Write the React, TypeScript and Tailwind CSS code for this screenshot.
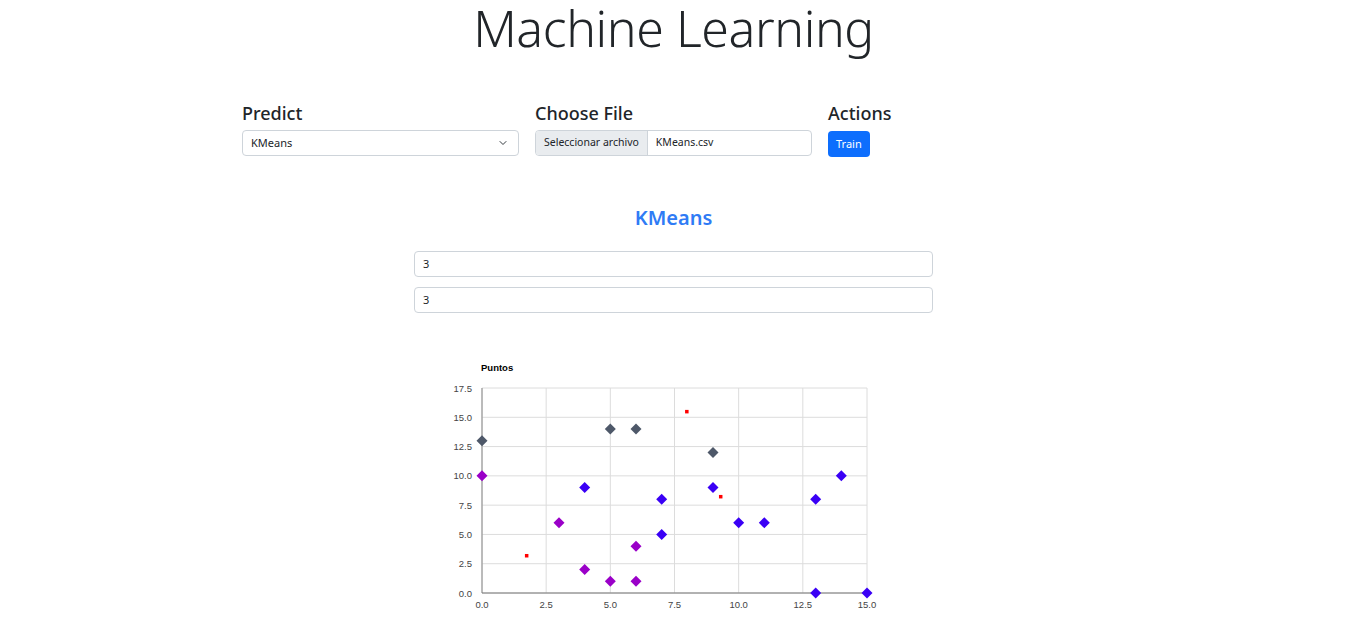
import React from "react";

const X0 = 58, X1 = 443, Y0 = 238, Y1 = 33;
const sx = (v: number) => X0 + (v / 15) * (X1 - X0);
const sy = (v: number) => Y0 - (v / 17.5) * (Y0 - Y1);

const gray = [[0, 13], [5, 14], [6, 14], [9, 12]];
const purple = [[0, 10], [3, 6], [4, 2], [5, 1], [6, 1], [6, 4]];
const blue = [[4, 9], [7, 8], [7, 5], [9, 9], [10, 6], [11, 6], [13, 8], [14, 10], [13, 0], [15, 0]];
const red = [[1.75, 3.16], [7.99, 15.46], [9.31, 8.2]];

function Diamond({ x, y, c }: { x: number; y: number; c: string }) {
  const r = 5.5;
  return <polygon points={`${x},${y - r} ${x + r},${y} ${x},${y + r} ${x - r},${y}`} fill={c} />;
}

function Chart() {
  const xt = [0, 2.5, 5, 7.5, 10, 12.5, 15];
  const yt = [0, 2.5, 5, 7.5, 10, 12.5, 15, 17.5];
  return (
    <svg width="499" height="267" viewBox="0 0 499 267" style={{ fontFamily: '"Liberation Sans", Arial, sans-serif' }}>
      <text x="57" y="16" fontSize="9.5" fontWeight="bold" fill="#000">Puntos</text>
      {xt.map((v) => (
        <line key={"gx" + v} x1={sx(v)} x2={sx(v)} y1={Y1} y2={Y0} stroke="#dcdcdc" strokeWidth="1" />
      ))}
      {yt.map((v) => (
        <line key={"gy" + v} x1={X0} x2={X1} y1={sy(v)} y2={sy(v)} stroke="#dcdcdc" strokeWidth="1" />
      ))}
      <line x1={X0} x2={X0} y1={Y1} y2={Y0} stroke="#888" strokeWidth="1" />
      <line x1={X0} x2={X1} y1={Y0} y2={Y0} stroke="#777" strokeWidth="1" />
      {yt.map((v) => (
        <text key={"ly" + v} x={X0 - 10} y={sy(v) + 3.5} fontSize="9.5" fill="#444" textAnchor="end">{v.toFixed(1)}</text>
      ))}
      {xt.map((v) => (
        <text key={"lx" + v} x={sx(v)} y={Y0 + 15} fontSize="9.5" fill="#444" textAnchor="middle">{v.toFixed(1)}</text>
      ))}
      {gray.map(([a, b], i) => <Diamond key={"g" + i} x={sx(a)} y={sy(b)} c="#4e5869" />)}
      {purple.map(([a, b], i) => <Diamond key={"p" + i} x={sx(a)} y={sy(b)} c="#9a00c8" />)}
      {blue.map(([a, b], i) => <Diamond key={"b" + i} x={sx(a)} y={sy(b)} c="#3a00f5" />)}
      {red.map(([a, b], i) => <rect key={"r" + i} x={sx(a) - 2} y={sy(b) - 2} width="3.5" height="3.5" fill="#ff0000" />)}
    </svg>
  );
}

export default function App() {
  return (
    <div className="min-h-screen bg-white text-[#212529]" style={{ fontFamily: '"Noto Sans", "Open Sans", sans-serif' }}>
      <h1 className="text-center text-[50px] font-light leading-[56px] tracking-[-0.4px]">Machine Learning</h1>
      <div className="mt-[45px] flex justify-center gap-4">
        <div className="w-[277px]">
          <h5 className="text-[18px] font-medium leading-[24px] mb-[5px]">Predict</h5>
          <div className="h-[26px] border border-[#ced4da] rounded-[4px] flex items-center justify-between px-2 text-[11px]">
            <span>KMeans</span>
            <svg width="10" height="8" viewBox="0 0 16 16" className="mr-[2px]"><path d="M2 5l6 6 6-6" fill="none" stroke="#343a40" strokeWidth="2" strokeLinecap="round" strokeLinejoin="round" /></svg>
          </div>
        </div>
        <div className="w-[277px]">
          <h5 className="text-[18px] font-medium leading-[24px] mb-[5px]">Choose File</h5>
          <div className="h-[26px] border border-[#ced4da] rounded-[4px] flex items-stretch text-[10.5px] overflow-hidden">
            <div className="bg-[#e9ecef] border-r border-[#ced4da] px-2 flex items-center">Seleccionar archivo</div>
            <div className="px-2 flex items-center">KMeans.csv</div>
          </div>
        </div>
        <div className="w-[277px]">
          <h5 className="text-[18px] font-medium leading-[24px] mb-[5px]">Actions</h5>
          <button className="h-[26px] px-2 bg-[#0d6efd] text-white text-[11px] rounded-[4px]">Train</button>
        </div>
      </div>
      <h4 className="mt-[48px] text-center text-[20px] font-semibold text-[#2f7bf5] leading-[26px]">KMeans</h4>
      <div className="w-[519px] mx-auto mt-[20px] flex flex-col gap-[10px]">
        <div className="h-[26px] border border-[#ced4da] rounded-[4px] flex items-center px-2 text-[11px]">3</div>
        <div className="h-[26px] border border-[#ced4da] rounded-[4px] flex items-center px-2 text-[11px]">3</div>
      </div>
      <div className="w-[499px] mx-auto mt-[42px]">
        <Chart />
      </div>
    </div>
  );
}
